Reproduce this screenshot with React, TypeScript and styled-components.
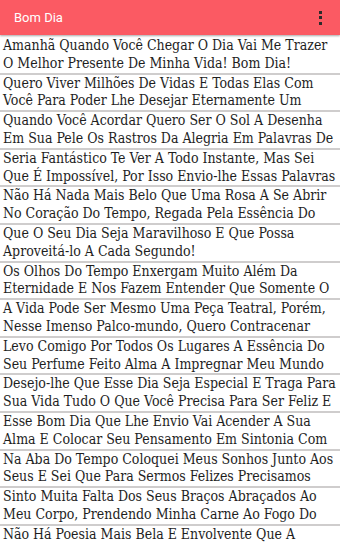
import React from "react";
import styled, { createGlobalStyle } from "styled-components";

const Global = createGlobalStyle`
  html, body { margin: 0; padding: 0; background: #ffffff; }
  body { width: 340px; height: 544px; overflow: hidden; }
`;

const Screen = styled.div`
  width: 340px;
  height: 544px;
  display: flex;
  flex-direction: column;
  background: #ffffff;
  overflow: hidden;
`;

const AppBar = styled.header`
  position: relative;
  z-index: 1;
  flex: 0 0 auto;
  height: 35px;
  display: flex;
  align-items: center;
  justify-content: space-between;
  padding: 0 18px 0 14px;
  background: #fb5a63;
  box-shadow: 0 1px 2px rgba(0, 0, 0, 0.35);
`;

const Title = styled.h1`
  margin: 0;
  font-family: Roboto, "Noto Sans", sans-serif;
  font-weight: 400;
  font-size: 13px;
  color: #ffffff;
`;

const MenuButton = styled.div`
  display: flex;
  flex-direction: column;
  gap: 2.5px;
`;

const Dot = styled.span`
  width: 3px;
  height: 3px;
  background: #2b2b2b;
`;

const List = styled.div`
  flex: 1 1 auto;
  display: flex;
  flex-direction: column;
  padding-top: 2px;
`;

const Row = styled.div`
  flex: 0 0 auto;
  height: 35.6px;
  padding: 0 0 0 3px;
  border-bottom: 2px solid #cfcdcd;
  overflow: hidden;
  font-family: "DejaVu Serif Condensed", "DejaVu Serif", serif;
  font-stretch: condensed;
  font-size: 14px;
  line-height: 17.8px;
  color: #1e1e1e;
`;

const Line = styled.div`
  white-space: nowrap;
`;

const items: [string, string][] = [
  ["Amanhã Quando Você Chegar O Dia Vai Me Trazer", "O Melhor Presente De Minha Vida! Bom Dia!"],
  ["Quero Viver Milhões De Vidas E Todas Elas Com", "Você Para Poder Lhe Desejar Eternamente Um"],
  ["Quando Você Acordar Quero Ser O Sol A Desenha", "Em Sua Pele Os Rastros Da Alegria Em Palavras De"],
  ["Seria Fantástico Te Ver A Todo Instante, Mas Sei", "Que É Impossível, Por Isso Envio-lhe Essas Palavras"],
  ["Não Há Nada Mais Belo Que Uma Rosa A Se Abrir", "No Coração Do Tempo, Regada Pela Essência Do"],
  ["Que O Seu Dia Seja Maravilhoso E Que Possa", "Aproveitá-lo A Cada Segundo!"],
  ["Os Olhos Do Tempo Enxergam Muito Além Da", "Eternidade E Nos Fazem Entender Que Somente O"],
  ["A Vida Pode Ser Mesmo Uma Peça Teatral, Porém,", "Nesse Imenso Palco-mundo, Quero Contracenar"],
  ["Levo Comigo Por Todos Os Lugares A Essência Do", "Seu Perfume Feito Alma A Impregnar Meu Mundo"],
  ["Desejo-lhe Que Esse Dia Seja Especial E Traga Para", "Sua Vida Tudo O Que Você Precisa Para Ser Feliz E"],
  ["Esse Bom Dia Que Lhe Envio Vai Acender A Sua", "Alma E Colocar Seu Pensamento Em Sintonia Com"],
  ["Na Aba Do Tempo Coloquei Meus Sonhos Junto Aos", "Seus E Sei Que Para Sermos Felizes Precisamos"],
  ["Sinto Muita Falta Dos Seus Braços Abraçados Ao", "Meu Corpo, Prendendo Minha Carne Ao Fogo Do"],
  ["Não Há Poesia Mais Bela E Envolvente Que A", "Sua Presença Em Minha Vida"],
];

export default function App() {
  return (
    <>
      <Global />
      <Screen>
        <AppBar>
          <Title>Bom Dia</Title>
          <MenuButton>
            <Dot />
            <Dot />
            <Dot />
          </MenuButton>
        </AppBar>
        <List>
          {items.map(([a, b], i) => (
            <Row key={i}>
              <Line>{a}</Line>
              <Line>{b}</Line>
            </Row>
          ))}
        </List>
      </Screen>
    </>
  );
}
